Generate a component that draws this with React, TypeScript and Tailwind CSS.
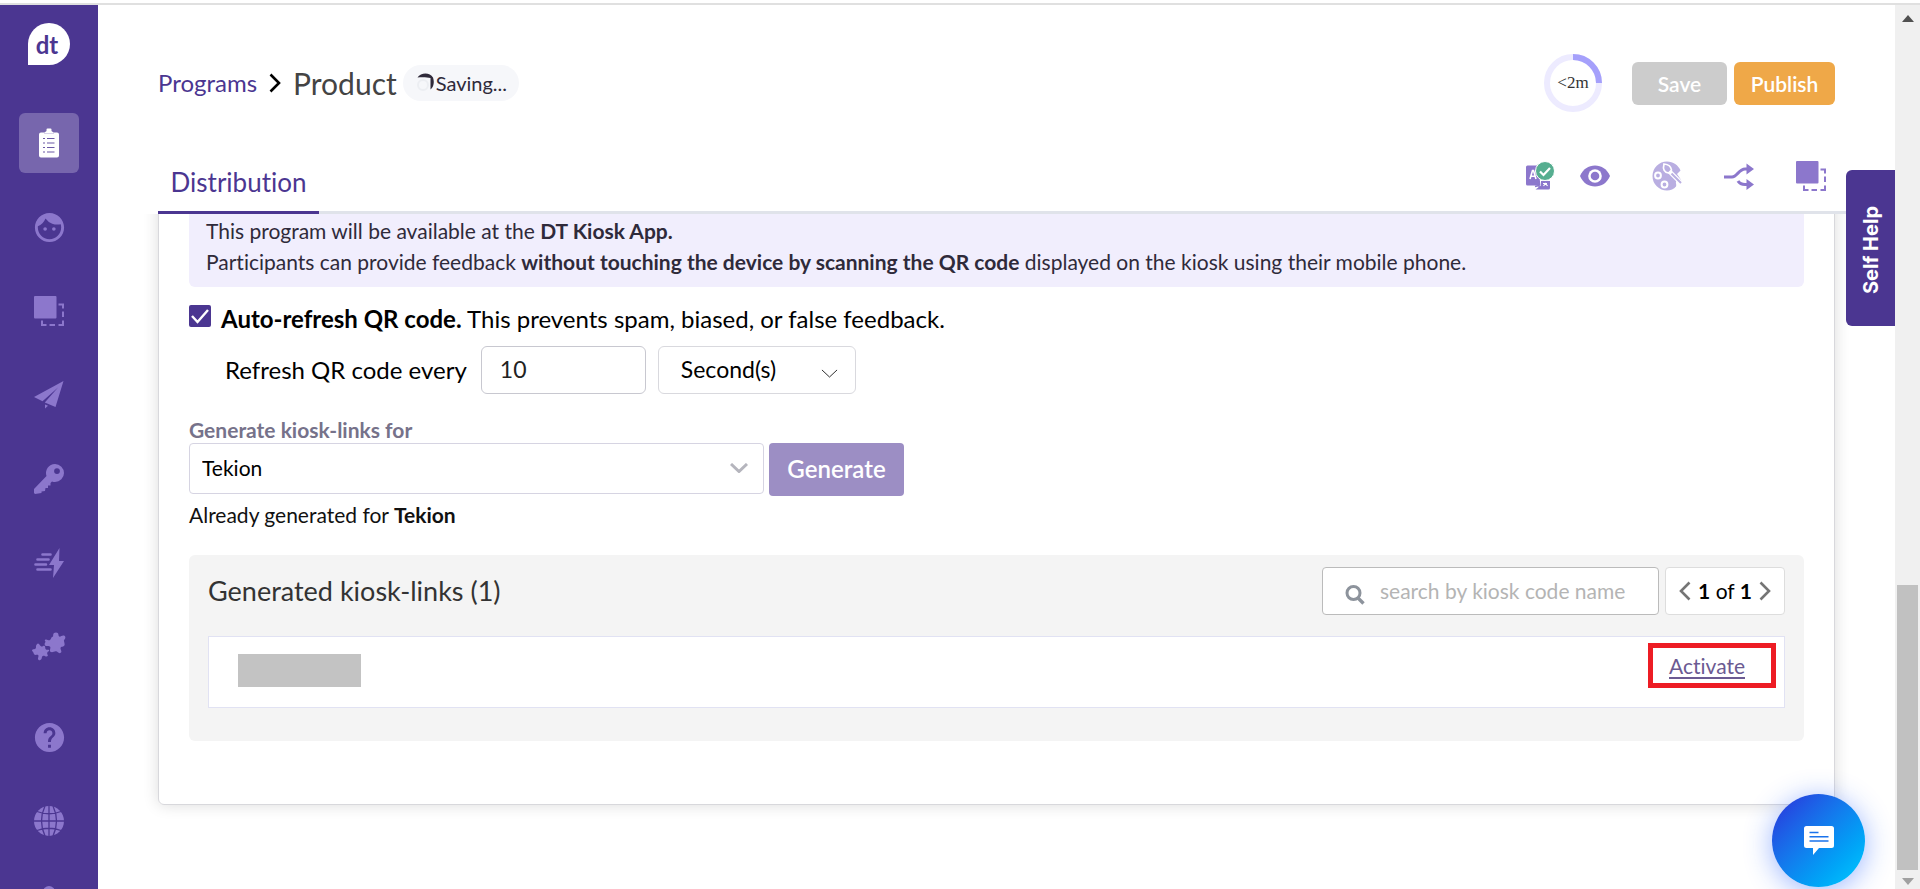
import type { ReactNode } from "react";
import { MdFace, MdHelp } from "react-icons/md";
import { clsx } from "clsx";

type IconPropsType = {
  size?: number;
};

const ClipboardIcon = () => (
  <svg width="30" height="30" viewBox="0 0 30 30" fill="none">
    <path d="M7 4.500h3.500l2-1.500V1.500a1 1 0 0 1 1-1h3a1 1 0 0 1 1 1V3l2 1.500H23A2 2 0 0 1 25 6.500V27.500a2 2 0 0 1-2 2H7a2 2 0 0 1-2-2V6.500a2 2 0 0 1 2-2z" fill="#fff" />
    <path d="M9 10.500h2M13 10.500h7.500M9 15h2M13 15h7.500M9 19.500h2M13 19.500h7.500M9 24h2M13 24h7.500" stroke="#6b58a6" strokeWidth="1.200" />
    <path d="M10 5.500h10" stroke="#cfc8e4" strokeWidth="0.800" />
  </svg>
);

const LayersIcon = ({ size = 30 }: IconPropsType) => (
  <svg width={size} height={size} viewBox="0 0 30 30" fill="none">
    <rect x="0" y="0" width="22.500" height="22.500" rx="1" fill="currentColor" />
    <path d="M24.500 8.500H29v4M29 15.500v5.500M29 24.500V29h-4.500M21 29h-5.500M12.500 29H8v-4.500" stroke="currentColor" strokeWidth="2" />
  </svg>
);

const PlaneIcon = () => (
  <svg width="30" height="30" viewBox="0 0 30 30" fill="currentColor">
    <path d="M29.500 1 0 17l8.500 4.300L24 7.500 10.800 22.500 21.500 27z" />
    <path d="M11 24.500v4l3-2.700z" />
  </svg>
);

const KeyIcon = () => (
  <svg width="30" height="30" viewBox="0 0 30 30" fill="currentColor">
    <path fillRule="evenodd" d="M21 0a9 9 0 0 1 0 18 9 9 0 0 1-3-.5L16.500 19v2.500H14V24h-2.500l-.5 3-3.500.5V29L1 30l-1-1v-4L12.500 12A9 9 0 0 1 21 0zM23 4.200a2.900 2.900 0 1 0 0 5.800 2.900 2.900 0 0 0 0-5.800z" />
  </svg>
);

const BoltIcon = () => (
  <svg width="30" height="30" viewBox="0 0 30 30">
    <path d="M8.500 6.500h8M3.500 11.500h11M1.500 16.500h10.500M3.500 21.500h13" stroke="currentColor" strokeWidth="2.600" strokeLinecap="round" />
    <path d="M25.500 0 15 17h5l-1 13L30 13h-5z" fill="currentColor" />
  </svg>
);

const PuzzleIcon = () => (
  <svg width="34" height="30" viewBox="0 0 34 30" fill="currentColor">
    <path d="M13.500 7.500c2-.5 3 1.500 4.500.5 1.500-1.200 1-3.300 3-3.300.5-1.500-.5-4 3-4.200 3.200.2 2 2.800 3.200 4 1.300.8 3-2 5.300-.7 2.200 2-.5 3.400-.6 5 .3 1.400 1 2.800.6 4.500-.8 1.800-3.600 1-4 2.800-.1 1.700 1.900 3.300.2 4.700-2 1.300-3-1.300-4.700-1.500-2-.2-3.500 1.700-5.600.4-1.600-1.500.8-3.200-.3-5-1.200-1.500-3 0-4.700-1-1.500-1.200-.5-3 .3-4-.8-.5-1.500-1.600-.2-2.200z" />
    <path d="M6 11.500c1.800.2 1.800 2.500 3.300 3 1.300.2 2.200-1.300 3.500-.5.8 1.300 0 2.500 1.200 3.500 1 .8 2.300-.5 3 .6.600 1.600-1.500 1.500-1.800 2.800-.2 1.300 1 2 .5 3.200-1.500 1-3-.7-4.500-.4-1.500.4-1.200 2-1.700 3.400-.8 1.500-3.200 1.300-3.500-.2-.2-1.500 1-2.500.3-3.700-1-1.200-2.500.4-4-.7-1-1.300-.8-3-2-3.300-.8-1 .3-2.200 1.500-2 1.300.1 2-.5 2.200-1.700-.2-1.300.2-3.400 2-4z" />
  </svg>
);

const GlobeIcon = () => (
  <svg width="30" height="30" viewBox="0 0 30 30" fill="none">
    <circle cx="15" cy="15" r="15" fill="currentColor" />
    <path d="M15 0v30M0 15h30M3 5.500q12 4.500 24 0M3 24.500q12-4.500 24 0M11 0q-7 15 0 30M19 0q7 15 0 30" stroke="#4b3691" strokeWidth="1.300" />
  </svg>
);

const TranslateIcon = () => (
  <svg width="30" height="30" viewBox="0 0 30 30">
    <path d="M2.500 4.500H13l2.500 20h-13A1.500 1.500 0 0 1 1 23V6a1.500 1.500 0 0 1 1.500-1.500z" fill="#8c77cc" />
    <path d="M16 20h9v7a1.500 1.500 0 0 1-1.500 1.500H10.500l5.500-4z" fill="#8c77cc" />
    <path d="m10 25.500 4-1 .5 3.500" stroke="#8c77cc" strokeWidth="1.500" fill="none" />
    <path d="m5 18 2.500-8.500h1L11 18M6 15.300h4" stroke="#fff" strokeWidth="1.600" fill="none" />
    <path d="M18 22.500h4M18.500 25l2-2.500 2 2.500" stroke="#fff" strokeWidth="1.200" fill="none" />
    <circle cx="20" cy="10" r="9.500" fill="#56ae90" stroke="#fff" />
    <path d="m15 10.500 3.500 3.500L25 7" stroke="#fff" strokeWidth="2.200" fill="none" />
  </svg>
);

const EyeIcon = () => (
  <svg width="30" height="30" viewBox="0 0 30 30">
    <path d="M0 15C3 8 8.500 4.500 15 4.500S27 8 30 15c-3 7-8.500 10.500-15 10.500S3 22 0 15z" fill="#8c77cc" />
    <circle cx="15" cy="15" r="6.800" fill="#fff" />
    <circle cx="15" cy="15" r="4.300" fill="#8c77cc" />
  </svg>
);

const PaletteIcon = () => (
  <svg width="30" height="30" viewBox="0 0 30 30" fill="none">
    <path d="M15 .5c6 0 11.500 3.800 13.500 9L25 13l4.500 6.500c-1.500 1.500-3.500-.5-5 .5-1.500 1.300.5 3.500-.5 5.500-2 2.800-5.500 4-9 4A14.500 14.500 0 0 1 15 .5z" fill="#b9aee1" />
    <circle cx="6" cy="14.500" r="2.900" stroke="#fff" strokeWidth="2" />
    <circle cx="12.500" cy="23.500" r="2.900" stroke="#fff" strokeWidth="2" />
    <path d="M12 3c5 .5 7 2 7.500 6l-3 3c-4-.5-6-3.500-4.500-9z" stroke="#fff" strokeWidth="1.700" />
    <path d="m18 11 12 12" stroke="#fff" strokeWidth="4.500" />
    <path d="m19.500 12.500 9.500 9.500" stroke="#b9aee1" strokeWidth="2" />
  </svg>
);

const BranchIcon = () => (
  <svg width="30" height="30" viewBox="0 0 30 30" fill="none">
    <path d="M0 16h8c5 0 7-8 13-8h3M14 20c2 3.200 4 3.500 7 3.500h3" stroke="#8c77cc" strokeWidth="3.200" />
    <path d="m22.500 2.500 7.500 5.500-7.500 5.500zM22.500 18l7.500 5.500-7.500 5.500z" fill="#8c77cc" />
  </svg>
);

const ChevronIcon = ({ className, strokeWidth = 2 }: { className?: string; strokeWidth?: number }) => (
  <svg className={className} viewBox="0 0 18 10" fill="none">
    <path d="m1 1 8 7.500L17 1" stroke="currentColor" strokeWidth={strokeWidth} />
  </svg>
);

const AngleIcon = ({ className }: { className?: string }) => (
  <svg width="12" height="20" viewBox="0 0 12 20" fill="none" className={className}>
    <path d="m1.500 1.500 8.500 8.500-8.500 8.500" stroke="currentColor" strokeWidth="2.600" />
  </svg>
);

const navItems: { label: string; icon: ReactNode; active?: boolean }[] = [
  { label: "Programs", icon: <ClipboardIcon />, active: true },
  { label: "Participants", icon: <MdFace size={35} /> },
  { label: "Templates", icon: <LayersIcon /> },
  { label: "Send", icon: <PlaneIcon /> },
  { label: "Access keys", icon: <KeyIcon /> },
  { label: "Automation", icon: <BoltIcon /> },
  { label: "Integrations", icon: <PuzzleIcon /> },
];

const Sidebar = () => (
  <nav className="w-[98px] shrink-0 overflow-hidden bg-[#4b3691] text-[#8c77cc] flex flex-col items-center pt-[18px]">
    <a
      href="#home"
      className="size-[42px] shrink-0 rounded-full rounded-bl-none bg-white text-[#4b3691] text-2xl leading-none font-bold flex items-center justify-center pr-1 pt-0.5"
    >
      dt
    </a>
    <div className="mt-12 flex shrink-0 flex-col gap-6">
      {navItems.map((item) => (
        <a
          key={item.label}
          href="#"
          aria-label={item.label}
          className={clsx("size-[60px] rounded-md flex items-center justify-center", item.active && "bg-[#7766ad]")}
        >
          {item.icon}
        </a>
      ))}
    </div>
    <div className="mt-[30px] flex shrink-0 flex-col gap-6">
      <a href="#" aria-label="Help" className="size-[60px] flex items-center justify-center">
        <MdHelp size={35} />
      </a>
      <a href="#" aria-label="Language" className="size-[60px] flex items-center justify-center">
        <GlobeIcon />
      </a>
      <a href="#" aria-label="Account" className="size-[60px] flex justify-center pt-2.5">
        <svg width="30" height="30" viewBox="0 0 30 30" fill="currentColor">
          <circle cx="15" cy="7" r="6" />
          <path d="M3 28c0-16 24-16 24 0z" />
        </svg>
      </a>
    </div>
  </nav>
);

const Header = () => (
  <header className="flex items-center justify-between px-[60px] pt-[49px]">
    <div className="flex items-center">
      <a href="#programs" className="text-2xl text-[#4b3691]">
        Programs
      </a>
      <AngleIcon className="mx-3 text-black" />
      <h1 className="text-3xl text-[#444]">Product</h1>
      <span className="ml-1.5 flex h-9 items-center rounded-full bg-[#f6f7fa] px-3 text-xl text-[#2f2a3a]">
        <svg width="21" height="20" viewBox="0 0 21 20" fill="none">
          <circle cx="8" cy="12" r="5" stroke="#eceef2" strokeWidth="2" />
          <path d="M2.500 4.500C6-1 15-1 18 4.500c1.500 4 1 9-2.500 12V5C12 4 6 4 2.500 4.500z" fill="#2f2a3a" />
        </svg>
        Saving...
      </span>
    </div>
    <div className="flex items-center">
      <svg width="58" height="58" viewBox="0 0 58 58" fill="none" className="mr-[30px]">
        <circle cx="29" cy="29" r="26" stroke="#edebff" strokeWidth="6" />
        <path d="M29 3a26 26 0 0 1 26 26" stroke="#a5a0fb" strokeWidth="6" />
        <text x="29" y="34" textAnchor="middle" fontSize="17" fill="#333" fontFamily="'Liberation Serif', serif">
          &lt;2m
        </text>
      </svg>
      <button disabled className="h-[43px] w-[95px] rounded-md bg-[#ccc] pt-0.5 text-[21px] font-semibold text-white">
        Save
      </button>
      <button className="ml-[7px] h-[43px] w-[101px] rounded-md bg-[#efa848] pt-0.5 text-[21px] font-semibold text-white">
        Publish
      </button>
    </div>
  </header>
);

const TabBar = () => (
  <div className="ml-[60px] mr-[49px] mt-[33px] flex items-end justify-between border-b-3 border-[#e0e3ea]">
    <a
      href="#distribution"
      className="-mb-[3px] flex h-[69px] w-[161px] items-center justify-center border-b-3 border-[#4b3691] pt-2 text-[26px] text-[#4b3691]"
    >
      Distribution
    </a>
    <div className="flex items-center pb-5 pr-5">
      <button aria-label="Translations" className="mr-[25px]">
        <TranslateIcon />
      </button>
      <div className="flex items-center gap-[42px] text-[#8c77cc]">
        <button aria-label="Preview">
          <EyeIcon />
        </button>
        <button aria-label="Theme">
          <PaletteIcon />
        </button>
        <button aria-label="Logic">
          <BranchIcon />
        </button>
        <button aria-label="Templates">
          <LayersIcon />
        </button>
      </div>
    </div>
  </div>
);

const KioskSettings = () => (
  <>
    <div className="rounded-b-md bg-[#f1eefd] px-[17px] pt-0.5 pb-[10px] text-[21px] leading-[31px] text-[#2f2a3a]">
      <p>
        This program will be available at the <b>DT Kiosk App.</b>
      </p>
      <p>
        Participants can provide feedback <b>without touching the device by scanning the QR code</b> displayed on the
        kiosk using their mobile phone.
      </p>
    </div>

    <label className="mt-4 flex text-2xl text-black">
      <span className="relative mt-0.5 mr-2.5 flex size-[22px]">
        <input type="checkbox" defaultChecked className="size-[22px] appearance-none rounded-xs bg-[#4b3691]" />
        <svg viewBox="0 0 22 22" fill="none" className="absolute inset-0">
          <path d="m3 11 5.500 6L19 5" stroke="#fff" strokeWidth="2.400" />
        </svg>
      </span>
      <span>
        <b>Auto-refresh QR code.</b> This prevents spam, biased, or false feedback.
      </span>
    </label>

    <div className="mt-[11px] ml-9 flex items-center text-2xl text-black">
      <label htmlFor="refresh-every">Refresh QR code every</label>
      <input
        id="refresh-every"
        defaultValue="10"
        className="ml-3.5 h-12 w-[165px] rounded-md border border-[#c8c8d0] px-[18px] pb-0.5 text-[23px] text-[#222]"
      />
      <div className="relative ml-3">
        <select
          aria-label="Refresh unit"
          className="h-12 w-[198px] appearance-none rounded-md border border-[#d9d9de] bg-white pb-0.5 pl-[22px] text-[23px]"
        >
          <option>Second(s)</option>
          <option>Minute(s)</option>
        </select>
        <ChevronIcon strokeWidth={1} className="pointer-events-none absolute right-[18px] top-[23px] w-[17px] text-[#222]" />
      </div>
    </div>

    <label htmlFor="kiosk-for" className="mt-[22px] block text-[21px] leading-[27px] font-bold text-[#76728a]">
      Generate kiosk-links for
    </label>
    <div className="flex gap-[5px]">
      <div className="relative w-[575px]">
        <select
          id="kiosk-for"
          className="h-[51px] w-full appearance-none rounded-sm border border-[#d6d4e2] bg-white pb-0.5 pl-3 text-[21px] text-black"
        >
          <option>Tekion</option>
        </select>
        <ChevronIcon strokeWidth={3} className="pointer-events-none absolute right-4 top-5 w-[18px] text-[#b5b5bd]" />
      </div>
      <button className="h-[53px] w-[135px] rounded-sm bg-[#9c8ec4] pb-0.5 text-2xl font-semibold text-white">
        Generate
      </button>
    </div>
    <p className="mt-1 text-[21px] leading-[30px] text-[#111]">
      Already generated for <b>Tekion</b>
    </p>
  </>
);

const GeneratedLinks = () => (
  <section className="mt-[25px] rounded-md bg-[#f4f4f4] px-[19px] pt-3 pb-[33px]">
    <div className="flex items-center justify-between">
      <h2 className="text-[27px] text-[#333]">Generated kiosk-links (1)</h2>
      <div className="flex gap-1.5">
        <div className="relative">
          <input
            aria-label="Search kiosk links"
            placeholder="search by kiosk code name"
            className="h-12 w-[337px] rounded-sm border border-[#bbb] bg-white pb-0.5 pl-[57px] pr-2 text-[21px] text-[#333] placeholder:text-[#b4b4b4]"
          />
          <svg width="20" height="20" viewBox="0 0 20 20" fill="none" className="absolute left-[23px] top-[18px]">
            <circle cx="8.500" cy="8" r="6.500" stroke="#8d939c" strokeWidth="3" />
            <path d="m13 13 5.500 5.500" stroke="#8d939c" strokeWidth="3.400" />
          </svg>
        </div>
        <div className="flex h-12 w-[120px] items-center justify-center gap-[7px] rounded-sm border border-[#ddd] bg-white text-[21px] text-black">
          <button aria-label="Previous page" className="text-[#757575]">
            <AngleIcon className="rotate-180" />
          </button>
          <span>
            <b>1</b> of <b>1</b>
          </span>
          <button aria-label="Next page" className="text-[#757575]">
            <AngleIcon />
          </button>
        </div>
      </div>
    </div>
    <div className="mt-[21px] flex h-[72px] items-start justify-between border border-[#e1e2f3] bg-white pl-[29px] pr-2">
      <div className="mt-[17px] h-[33px] w-[123px] bg-[#c3c3c3]" />
      <div className="mt-1.5 flex h-[45px] w-32 items-center border-5 border-[#ed1c24] pl-4">
        <a href="#activate" className="text-[21px] text-[#6b5a92] underline underline-offset-3">
          Activate
        </a>
      </div>
    </div>
  </section>
);

const ScrollRail = () => (
  <div className="flex w-[25px] shrink-0 flex-col items-center bg-[#f0f0f0] pt-2.5 pb-1">
    <svg width="12" height="7" viewBox="0 0 12 7">
      <path d="M0 7 6 0l6 7z" fill="#505050" />
    </svg>
    <div className="mt-auto h-[285px] w-[21px] bg-[#c1c1c1]" />
    <svg width="12" height="7" viewBox="0 0 12 7" className="mt-2 shrink-0">
      <path d="m0 0 6 7 6-7z" fill="#a0a0a0" />
    </svg>
  </div>
);

export default function App() {
  return (
    <div className="flex h-screen flex-col overflow-hidden bg-white font-['Lato',sans-serif] [font-variant-ligatures:none]">
      <div className="h-[5px] shrink-0 border-b-2 border-[#e0e0e0]" />
      <div className="flex min-h-0 flex-1">
        <Sidebar />
        <div className="flex min-w-0 flex-1 flex-col">
          <Header />
          <TabBar />
          <main className="flex-1 overflow-hidden px-[60px]">
            <div className="-mt-[21px] rounded-md border border-[#d8d8dc] px-[30px] pt-[19px] pb-[63px] shadow-[0_0_16px_rgba(0,0,0,0.14)]">
              <KioskSettings />
              <GeneratedLinks />
            </div>
          </main>
        </div>
        <ScrollRail />
      </div>

      <button className="fixed right-[25px] top-[170px] flex h-[156px] w-[49px] items-center justify-center rounded-l-md bg-[#4b3691] pt-1 font-['Inter',sans-serif] text-xl font-bold text-white">
        <span className="rotate-180 [writing-mode:vertical-rl]">Self Help</span>
      </button>

      <button
        aria-label="Open chat"
        className="fixed bottom-0.5 right-[55px] flex size-[93px] items-center justify-center rounded-full bg-linear-135 from-[#2a27da] to-[#00ccff] shadow-[0_4px_28px_rgba(30,90,255,0.45)]"
      >
        <svg width="32" height="32" viewBox="0 0 32 32" fill="none">
          <path d="M3.500 1h25A2.500 2.500 0 0 1 31 3.500v17a2.500 2.500 0 0 1-2.500 2.500H16l-6 7v-7H3.500A2.500 2.500 0 0 1 1 20.500v-17A2.500 2.500 0 0 1 3.500 1z" fill="#fff" />
          <path d="M6.500 7.500h9M6.500 11.800h19M6.500 16h19" stroke="#1a73ec" strokeWidth="1.600" />
        </svg>
      </button>
    </div>
  );
}
